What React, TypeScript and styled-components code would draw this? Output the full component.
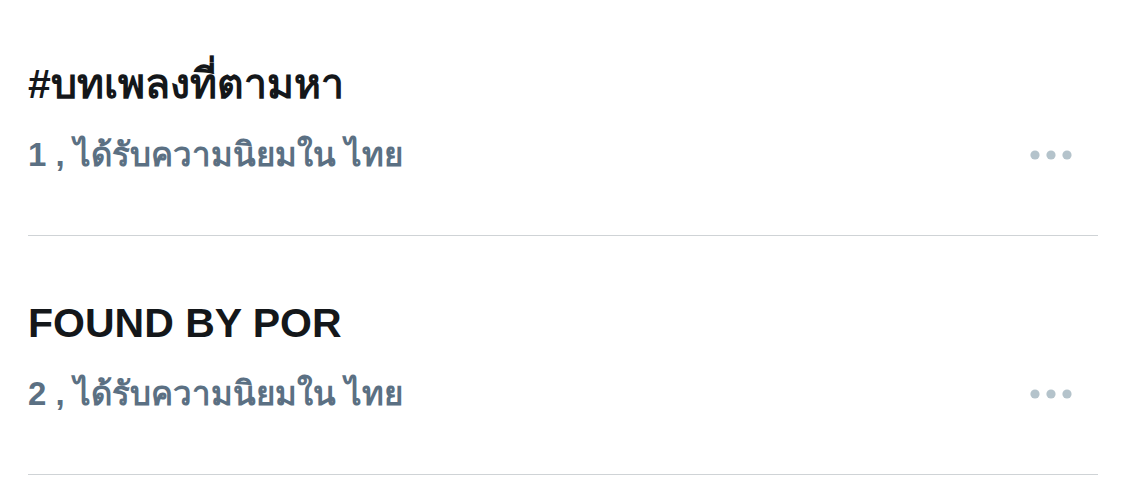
import React from "react";
import styled, { createGlobalStyle } from "styled-components";

const GlobalStyle = createGlobalStyle`
  html, body {
    margin: 0;
    padding: 0;
    background: #ffffff;
  }
  body {
    font-family: "Liberation Sans", Arial, "Noto Sans", sans-serif;
    -webkit-font-smoothing: antialiased;
  }
`;

const List = styled.div`
  display: flex;
  flex-direction: column;
  padding: 0 27px 0 28px;
`;

const Item = styled.div<{ $top: number }>`
  display: flex;
  flex-direction: column;
  padding-top: ${(p) => p.$top}px;
  padding-bottom: 56px;
  border-bottom: 1px solid #cfd3d6;
`;

const Title = styled.div`
  font-size: 41px;
  line-height: 48px;
  font-weight: 700;
  color: #14171a;
  white-space: nowrap;
`;

const MetaRow = styled.div`
  display: flex;
  align-items: center;
  justify-content: space-between;
  margin-top: 23px;
`;

const Meta = styled.div`
  font-size: 33px;
  line-height: 48px;
  font-weight: 700;
  color: #5b7083;
  white-space: nowrap;
`;

const MoreButton = styled.button`
  display: flex;
  align-items: center;
  justify-content: center;
  border: 0;
  background: transparent;
  padding: 0;
  margin-right: 26px;
  width: 42px;
  height: 12px;
  cursor: pointer;
`;

const MoreIcon = () => (
  <svg width="42" height="12" viewBox="0 0 42 12">
    <circle cx="5" cy="6" r="4.6" fill="#b4c3cb" />
    <circle cx="21" cy="6" r="4.6" fill="#b4c3cb" />
    <circle cx="37" cy="6" r="4.6" fill="#b4c3cb" />
  </svg>
);

const trends = [
  { rank: 1, name: "#บทเพลงที่ตามหา", top: 60 },
  { rank: 2, name: "FOUND BY POR", top: 63 },
];

export default function App() {
  return (
    <>
      <GlobalStyle />
      <List>
        {trends.map((t) => (
          <Item key={t.rank} $top={t.top}>
            <Title>{t.name}</Title>
            <MetaRow>
              <Meta>{t.rank} , ได้รับความนิยมใน ไทย</Meta>
              <MoreButton aria-label="More">
                <MoreIcon />
              </MoreButton>
            </MetaRow>
          </Item>
        ))}
      </List>
    </>
  );
}
